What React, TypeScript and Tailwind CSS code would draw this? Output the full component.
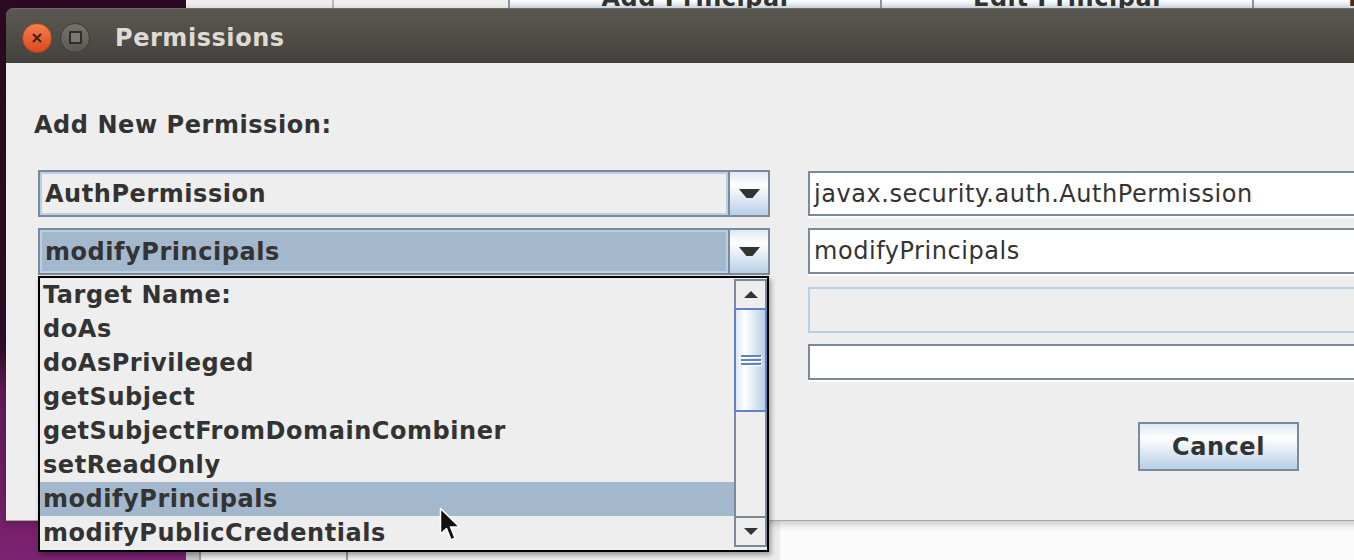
import React from "react";

const TARGETS = [
  "Target Name:",
  "doAs",
  "doAsPrivileged",
  "getSubject",
  "getSubjectFromDomainCombiner",
  "setReadOnly",
  "modifyPrincipals",
  "modifyPublicCredentials",
];

const OCEAN_V = "bg-[linear-gradient(to_bottom,#dde8f3_0%,#ffffff_30%,#b8cfe5_100%)]";

function DownArrow() {
  return (
    <svg width="21" height="9" viewBox="0 0 21 9">
      <polygon points="0,0 21,0 13.5,9 7.5,9" fill="#333333" />
    </svg>
  );
}

function Combo({ text, selected }: { text: string; selected?: boolean }) {
  return (
    <div className="flex h-[47px] border-2 border-[#7a8a99]">
      <div
        className={[
          "flex flex-1 items-center border-2 border-[#b8cfe5] pl-[3px] font-bold",
          selected ? "bg-[#a3b8cc]" : "bg-[#eeeeee]",
        ].join(" ")}
      >
        {text}
      </div>
      <div className={`flex w-[40px] items-center justify-center border-l-2 border-[#7a8a99] ${OCEAN_V}`}>
        <DownArrow />
      </div>
    </div>
  );
}

function Field({ text, h, className }: { text?: string; h: string; className?: string }) {
  return (
    <div
      className={[
        "flex items-center border-t-2 border-b-2 border-l-2 border-[#7a8a99] bg-white pl-[4px] shadow-[0_2px_0_#ffffff]",
        h,
        className ?? "",
      ].join(" ")}
    >
      {text}
    </div>
  );
}

function Scrollbar() {
  return (
    <div className="flex w-[33px] flex-col pt-[1px]">
      {/* up */}
      <div className="flex h-[29px] items-center justify-center border-t-2 border-r-2 border-l-2 border-[#7a8a99] bg-[#eeeeee]">
        <svg width="14" height="7" viewBox="0 0 14 7">
          <polygon points="7,0 14,7 0,7" fill="#333333" />
        </svg>
      </div>
      {/* thumb */}
      <div className="flex h-[104px] items-center justify-center border-2 border-[#6382bf] bg-[linear-gradient(to_right,#dde8f3_0%,#ffffff_30%,#b8cfe5_100%)]">
        <div className="flex w-[20px] flex-col gap-[2px]">
          <span className="h-[2px] bg-[#6382bf] shadow-[1px_1px_0_#ffffff]" />
          <span className="h-[2px] bg-[#6382bf] shadow-[1px_1px_0_#ffffff]" />
          <span className="h-[2px] bg-[#6382bf] shadow-[1px_1px_0_#ffffff]" />
        </div>
      </div>
      {/* track */}
      <div className="h-[104px] border-r-2 border-l-2 border-[#7a8a99] bg-[#eeeeee]" />
      {/* down */}
      <div className="flex h-[31px] items-center justify-center border-2 border-[#7a8a99] bg-[#eeeeee]">
        <svg width="14" height="7" viewBox="0 0 14 7">
          <polygon points="0,0 14,0 7,7" fill="#333333" />
        </svg>
      </div>
    </div>
  );
}

export default function App() {
  return (
    <div className="relative h-[560px] w-[1354px] overflow-hidden bg-[linear-gradient(to_bottom,#2c0a23_0%,#320c29_62%,#641b58_70%,#7b2371_100%)] font-['DejaVu_Sans',sans-serif] text-[24px] leading-[24px] tracking-[0.55px] text-[#333333]">
      {/* ── Window behind ── */}
      <div className="absolute top-0 right-0 bottom-0 left-[186px] flex flex-col bg-[#ececec]">
        <div className="flex h-[8px] overflow-hidden">
          <div className="w-[146px] shrink-0 bg-[#efefef]" />
          <div className="w-[2px] shrink-0 bg-[#b9b9b9]" />
          <div className="w-[174px] shrink-0 bg-[#f0f0f0]" />
          <div className="flex w-[372px] shrink-0 justify-center overflow-hidden border-l-2 border-[#8a96a3] bg-[linear-gradient(to_bottom,#ffffff,#d3e0ed)] font-bold">
            <span className="-mt-[14px] whitespace-nowrap">Add Principal</span>
          </div>
          <div className="flex w-[372px] shrink-0 justify-center overflow-hidden border-l-2 border-[#8a96a3] bg-[linear-gradient(to_bottom,#ffffff,#d3e0ed)] font-bold">
            <span className="-mt-[14px] whitespace-nowrap">Edit Principal</span>
          </div>
          <div className="flex w-[372px] shrink-0 justify-start overflow-hidden border-l-2 border-[#8a96a3] bg-[linear-gradient(to_bottom,#ffffff,#d3e0ed)] pl-[94px] font-bold">
            <span className="-mt-[14px] whitespace-nowrap">Remove Principal</span>
          </div>
        </div>
        <div className="flex-1" />
        <div className="flex h-[40px]">
          <div className="w-[13px] shrink-0 bg-[#c6c6c6]" />
          <div className="w-[2px] shrink-0 bg-[#9a9a9a]" />
          <div className="w-[145px] shrink-0 bg-[#ececec]" />
          <div className="w-[2px] shrink-0 bg-[#9a9a9a]" />
          <div className="w-[432px] shrink-0 bg-[#ececec]" />
          <div className="flex-1 bg-[#fbfbfb]" />
        </div>
      </div>

      {/* ── Dialog ── */}
      <div className="absolute top-[8px] left-[6px] flex h-[512px] w-[1400px] flex-col rounded-tl-[7px] shadow-[0_1px_0_#a8a8a8,0_3px_10px_rgba(0,0,0,0.25)]">
        {/* Title bar */}
        <div className="flex h-[55px] items-center gap-[8px] rounded-tl-[7px] border-t border-[#6b685f] bg-[linear-gradient(to_bottom,#5b5851,#44423d)] pt-[3px] pl-[16px]">
          <span className="flex h-[30px] w-[30px] items-center justify-center rounded-full border border-[#b5441c] bg-[linear-gradient(to_bottom,#f5804f,#dc481b)]">
            <svg width="10" height="10" viewBox="0 0 10 10">
              <path d="M1 1 L9 9 M9 1 L1 9" stroke="#3a2219" strokeWidth="2" />
            </svg>
          </span>
          <span className="flex h-[30px] w-[30px] items-center justify-center rounded-full border border-[#3d3c38] bg-[linear-gradient(to_bottom,#76736c,#5b5953)]">
            <span className="h-[13px] w-[13px] rounded-[1px] border-2 border-[#2e2d2a] bg-[#7b7872]" />
          </span>
          <span className="ml-[17px] font-bold text-[#dfdbd2]">Permissions</span>
        </div>

        {/* Body */}
        <div className="flex flex-1 flex-col bg-[#eeeeee] pt-[50px] pl-[28px]">
          <div className="font-bold">Add New Permission:</div>

          <div className="mt-[33px] ml-[4px] flex gap-[38px]">
            {/* Left: combos */}
            <div className="relative flex w-[732px] shrink-0 flex-col gap-[11px]">
              <Combo text="AuthPermission" />
              <Combo text="modifyPrincipals" selected />

              {/* Popup list */}
              <div className="absolute top-[106px] left-0 z-10 flex h-[276px] w-[731px] border-2 border-black bg-[#eeeeee] shadow-[2px_3px_5px_rgba(0,0,0,0.35)]">
                <div className="flex flex-1 flex-col">
                  {TARGETS.map((t) => (
                    <div
                      key={t}
                      className={[
                        "h-[34px] pl-[3px] leading-[34px] font-bold",
                        t === "modifyPrincipals" ? "bg-[#a3b8cc]" : "",
                      ].join(" ")}
                    >
                      {t}
                    </div>
                  ))}
                </div>
                <Scrollbar />
              </div>
            </div>

            {/* Right: text fields */}
            <div className="flex w-[600px] shrink-0 flex-col pt-[1px]">
              <Field text="javax.security.auth.AuthPermission" h="h-[45px]" />
              <Field text="modifyPrincipals" h="h-[46px]" className="mt-[12px]" />
              <div className="mt-[13px] h-[46px] border-2 border-[#b8cfe5] bg-[#eeeeee]" />
              <Field h="h-[36px]" className="mt-[11px]" />

              <button
                className={`mt-[42px] ml-[330px] flex h-[49px] w-[161px] items-center justify-center border-2 border-[#7a8a99] font-bold ${OCEAN_V}`}
              >
                Cancel
              </button>
            </div>
          </div>
        </div>
      </div>

      {/* ── Mouse pointer ── */}
      <svg
        className="absolute top-[507px] left-[439px] z-20"
        width="24"
        height="36"
        viewBox="0 0 24 36"
      >
        <polygon
          points="1.5,1.5 1.5,27 7.5,21.5 12,33 16,31 11.5,20 20.5,20"
          fill="#111111"
          stroke="#ffffff"
          strokeWidth="1.5"
          strokeLinejoin="round"
        />
      </svg>
    </div>
  );
}
